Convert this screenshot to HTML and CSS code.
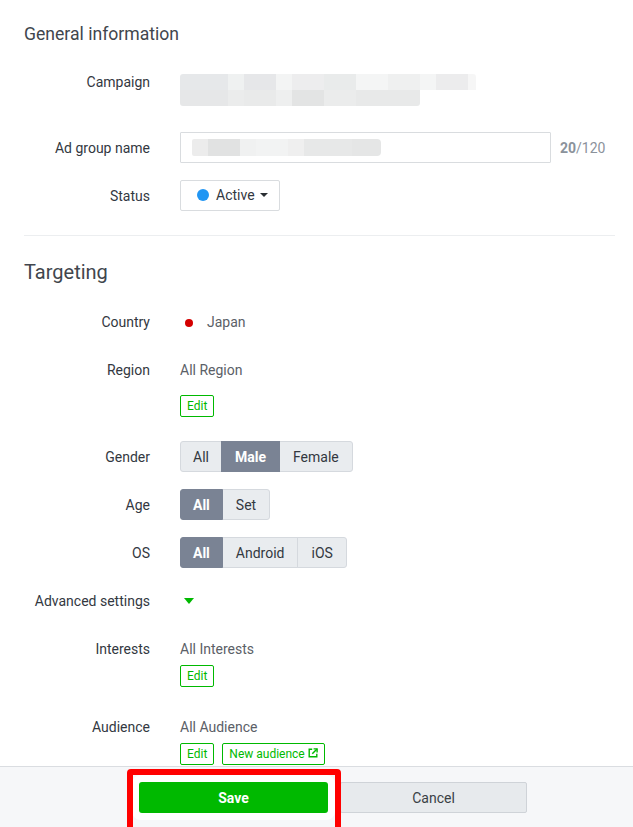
FILE: index.html
```html
<!DOCTYPE html>
<html lang="en">
<head>
<meta charset="utf-8">
<title>Ad group</title>
<link rel="stylesheet" href="styles.css">
</head>
<body>
<div class="page">
  <div class="scroll">
    <h2 class="section-title first">General information</h2>

    <div class="row row-campaign">
      <div class="label">Campaign</div>
      <div class="value">
        <div class="blur-line blur-1"></div>
        <div class="blur-line blur-2"></div>
      </div>
    </div>

    <div class="row row-adgroup">
      <div class="label">Ad group name</div>
      <div class="value inline">
        <div class="text-input"><div class="blur-input"></div></div>
        <div class="counter"><b>20</b>/120</div>
      </div>
    </div>

    <div class="row">
      <div class="label">Status</div>
      <div class="value">
        <button class="dropdown"><span class="dot-blue"></span>Active<span class="caret"></span></button>
      </div>
    </div>

    <hr class="divider">

    <h2 class="section-title second">Targeting</h2>

    <div class="row row-country">
      <div class="label">Country</div>
      <div class="value"><div class="text"><span class="dot-red"></span>Japan</div></div>
    </div>

    <div class="row">
      <div class="label">Region</div>
      <div class="value">
        <div class="text">All Region</div>
        <div class="edit-line region-edit"><button class="btn-edit">Edit</button></div>
      </div>
    </div>

    <div class="row row-after-edit">
      <div class="label">Gender</div>
      <div class="value">
        <div class="btn-group">
          <button class="seg">All</button><button class="seg active">Male</button><button class="seg">Female</button>
        </div>
      </div>
    </div>

    <div class="row">
      <div class="label">Age</div>
      <div class="value">
        <div class="btn-group">
          <button class="seg active">All</button><button class="seg">Set</button>
        </div>
      </div>
    </div>

    <div class="row">
      <div class="label">OS</div>
      <div class="value">
        <div class="btn-group">
          <button class="seg active">All</button><button class="seg">Android</button><button class="seg">iOS</button>
        </div>
      </div>
    </div>

    <div class="row">
      <div class="label">Advanced settings</div>
      <div class="value"><span class="tri-green"></span></div>
    </div>

    <div class="row">
      <div class="label">Interests</div>
      <div class="value">
        <div class="text">All Interests</div>
        <div class="edit-line"><button class="btn-edit">Edit</button></div>
      </div>
    </div>

    <div class="row row-after-edit">
      <div class="label">Audience</div>
      <div class="value">
        <div class="text">All Audience</div>
        <div class="edit-line">
          <button class="btn-edit">Edit</button>
          <button class="btn-edit">New audience
            <svg class="ext" viewBox="0 0 10 10" width="10" height="10" aria-hidden="true">
              <path d="M4.2 1.2H1.2V8.8H8.8V5.8" fill="none" stroke="#00b900" stroke-width="1.4"/>
              <path d="M5.6 0.9H9.1V4.4" fill="none" stroke="#00b900" stroke-width="1.4"/>
              <path d="M9 1L4.3 5.7" fill="none" stroke="#00b900" stroke-width="1.5"/>
            </svg>
          </button>
        </div>
      </div>
    </div>
  </div>

  <div class="footer">
    <div class="save-wrap">
      <button class="btn-save">Save</button>
    </div>
    <button class="btn-cancel">Cancel</button>
  </div>
</div>
</body>
</html>
```

FILE: styles.css
```css
* { box-sizing: border-box; }

html, body {
  margin: 0;
  padding: 0;
  background: #ffffff;
}

body {
  font-family: Roboto, "Liberation Sans", Arial, sans-serif;
  font-size: 14px;
  color: #333840;
}

button {
  font-family: inherit;
  font-size: inherit;
  margin: 0;
  cursor: pointer;
}

.page {
  display: flex;
  flex-direction: column;
  height: 827px;
  width: 633px;
}

.scroll {
  flex: 1;
  overflow: hidden;
}

.section-title {
  margin: 24px 0 0;
  padding: 0 24px;
  line-height: 24px;
  font-weight: 400;
  color: #41464d;
}
.section-title.first { margin-top: 22px; font-size: 17.6px; }
.section-title.second { font-size: 20px; }

.row {
  display: grid;
  grid-template-columns: 126px 1fr;
  column-gap: 30px;
  padding-left: 24px;
  padding-right: 18px;
  margin-top: 17px;
  align-items: start;
}

.label {
  text-align: right;
  line-height: 33px;
  margin-bottom: -2px;
  color: #33383f;
  white-space: nowrap;
}

.value { min-height: 31px; }
.value.inline { display: flex; align-items: center; }
.text {
  line-height: 33px;
  margin-bottom: -2px;
  color: #5b6067;
}

/* campaign */
.row-campaign { margin-top: 20px; }
.row-campaign .value { padding-top: 8px; }
.blur-line { height: 16px; }
.blur-1 {
  width: 296px;
  border-radius: 3px 3px 0 0;
  background: linear-gradient(90deg,
    #e6e8ea 0 48px, #eff1f1 48px 64px, #e6e7e9 64px 96px,
    #f3f4f4 96px 112px, #ededee 112px 144px, #e9ebeb 144px 176px,
    #f4f5f5 176px 208px, #eff0f0 208px 240px, #f4f5f5 240px 256px,
    #ececed 256px 288px, #f6f6f6 288px 296px);
}
.blur-2 {
  width: 240px;
  border-radius: 0 0 3px 3px;
  background: linear-gradient(90deg,
    #e6e7e8 0 48px, #ebecec 48px 64px, #e9eaea 64px 96px,
    #eeefef 96px 112px, #e3e4e4 112px 144px, #ebecec 144px 176px,
    #e8e9e9 176px 240px);
}

/* ad group input */
.row-adgroup { margin-top: 26px; }
.text-input {
  width: 371px;
  height: 31px;
  border: 1px solid #d9dcdf;
  border-radius: 1px;
  padding: 6px 0 0 11px;
}
.blur-input {
  width: 189px;
  height: 17px;
  border-radius: 2px 4px 4px 2px;
  background: linear-gradient(90deg,
    #ececec 0 16px, #e1e2e2 16px 48px, #f0f1f1 48px 64px,
    #f2f3f3 64px 96px, #efefef 96px 112px, #e7e8e8 112px 160px,
    #e5e6e6 160px 189px);
}
.counter {
  margin-left: 9px;
  color: #8b929b;
  font-size: 14px;
}
.counter b { font-weight: 700; }

/* dropdown */
.dropdown {
  display: inline-flex;
  align-items: center;
  height: 31px;
  width: 100px;
  padding: 0 0 1px 16px;
  border: 1px solid #d9dcdf;
  border-radius: 2px;
  background: #fff;
  color: #33383f;
}
.dot-blue {
  width: 12px;
  height: 12px;
  border-radius: 50%;
  background: #2196f3;
  margin-right: 7px;
}
.caret {
  width: 0;
  height: 0;
  margin-left: 5px;
  border-left: 4px solid transparent;
  border-right: 4px solid transparent;
  border-top: 4px solid #2a2e33;
}

.divider {
  margin: 24px 18px 0 24px;
  border: 0;
  border-top: 1px solid #eceef0;
  height: 0;
}

/* country */
.row-country { margin-top: 22px; }
.dot-red {
  display: inline-block;
  width: 8px;
  height: 8px;
  border-radius: 50%;
  background: #d40000;
  margin: 0 14px 0 5px;
  vertical-align: 0;
}

/* edit buttons */
.edit-line {
  display: flex;
  gap: 8px;
  margin-top: 1px;
}
.region-edit { margin-top: 10px; }
.btn-edit {
  display: inline-flex;
  align-items: center;
  gap: 3px;
  height: 22px;
  padding: 0 6px;
  border: 1px solid #00b900;
  border-radius: 2px;
  background: #fff;
  color: #00b900;
  font-size: 12px;
}
.ext { margin-top: -2px; }

.row-after-edit { margin-top: 24px; }

/* segmented groups */
.btn-group {
  display: inline-flex;
}
.seg {
  height: 31px;
  padding: 0 13px;
  border: 1px solid #d5d9de;
  background: #e9ecef;
  color: #33383f;
  margin-left: -1px;
}
.seg:first-child { margin-left: 0; padding: 0 12px; border-radius: 3px 0 0 3px; }
.seg:last-child { border-radius: 0 3px 3px 0; }
.seg.active {
  background: #7a8394;
  border-color: #7a8394;
  color: #fff;
  font-weight: 700;
  position: relative;
}

.tri-green {
  display: inline-block;
  margin: 13px 0 0 4px;
  width: 0;
  height: 0;
  border-left: 5.5px solid transparent;
  border-right: 5.5px solid transparent;
  border-top: 6px solid #00b900;
  vertical-align: top;
}

/* footer */
.footer {
  height: 61px;
  flex: none;
  border-top: 1px solid #dadde1;
  background: #f6f7f9;
  display: flex;
  gap: 12px;
  padding: 15px 0 0 139px;
}
.save-wrap {
  position: relative;
}
.save-wrap::after {
  content: "";
  position: absolute;
  left: -12px;
  top: -13px;
  right: -13px;
  bottom: -13px;
  border: 6px solid #ff0000;
  border-radius: 4px;
  pointer-events: none;
}
.btn-save {
  width: 189px;
  height: 31px;
  border: 0;
  border-radius: 3px;
  background: #00b900;
  color: #fff;
  font-weight: 700;
  box-shadow: 0 0 0 7px #ffffff;
}
.btn-cancel {
  width: 187px;
  height: 31px;
  border: 1px solid #cfd3d8;
  border-radius: 2px;
  background: #e7eaed;
  color: #3a3f45;
}
```
